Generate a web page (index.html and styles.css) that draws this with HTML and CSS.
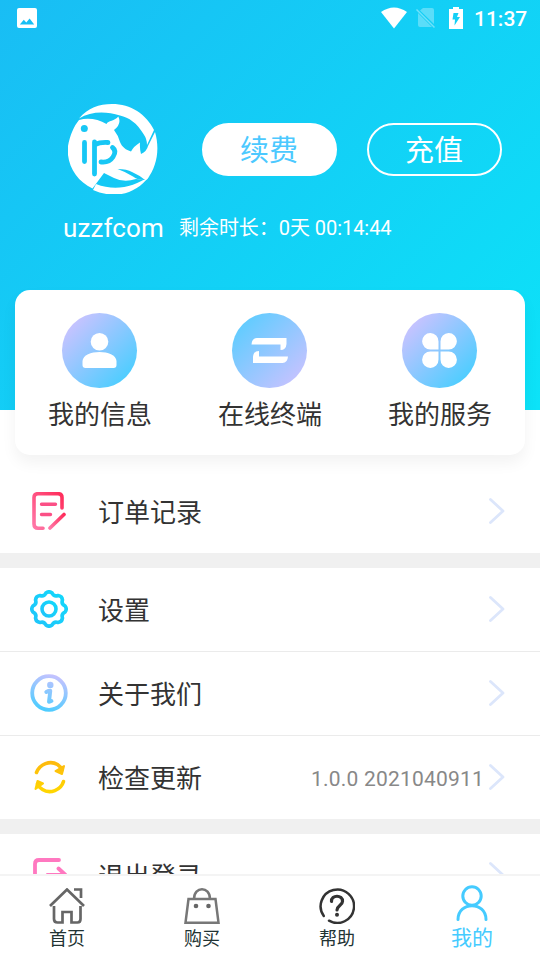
FILE: index.html
```html
<!DOCTYPE html>
<html lang="zh-CN">
<head>
<meta charset="utf-8">
<title>我的</title>
<link rel="stylesheet" href="styles.css">
</head>
<body>
<svg class="defs" width="0" height="0">
  <defs>
    <linearGradient id="pink" x1="1" y1="0" x2="0" y2="1"><stop offset="0" stop-color="#ff2d5b"/><stop offset="1" stop-color="#ff78a8"/></linearGradient>
    <linearGradient id="cyan" x1="1" y1="0" x2="0" y2="1"><stop offset="0" stop-color="#12d8fb"/><stop offset="1" stop-color="#20c4fa"/></linearGradient>
    <linearGradient id="lilac" gradientUnits="userSpaceOnUse" x1="24" y1="0" x2="12" y2="38"><stop offset="0" stop-color="#c8c2ff"/><stop offset="1" stop-color="#45cdff"/></linearGradient>
    <linearGradient id="gold" gradientUnits="userSpaceOnUse" x1="0" y1="2" x2="0" y2="36"><stop offset="0" stop-color="#fdb80f"/><stop offset="1" stop-color="#ffd800"/></linearGradient>
  </defs>
</svg>
<div class="screen">
  <header class="hero">
    <div class="status">
      <svg width="20" height="20" viewBox="0 0 20 20"><path fill="#fff" fill-rule="evenodd" d="M2 0h16q2 0 2 2v16q0 2-2 2H2q-2 0-2-2V2q0-2 2-2zM2.800 16.500h14.400L12.600 10.400 9.300 14.600 6.800 11.700z"/></svg>
      <div class="status-right">
        <svg width="26" height="22" viewBox="0 0 26 22"><path fill="#fff" d="M0 5Q13-4 26 5L13 21.500z"/></svg>
        <svg width="20" height="22" viewBox="0 0 20 22"><path fill="#fff" opacity=".3" d="M7 1h9q2 0 2 2v14L4 3.500zM2 6l14 14H4q-2 0-2-2z"/><path stroke="#fff" opacity=".4" stroke-width="1.500" d="M.5 2.500l18 18"/></svg>
        <svg width="14" height="22" viewBox="0 0 14 22"><path fill="#fff" fill-rule="evenodd" d="M4 0h6v2h4v20H0V2h4zM4.500 6L3.500 12.500H6L5.500 18.500 11 10H8L9.500 6z"/></svg>
        <span class="clock">11:37</span>
      </div>
    </div>
    <div class="profile">
      <svg class="logo" width="90" height="90" viewBox="0 0 90 90">
        <path fill="#fff" d="M11 14.500C20 4 31 0 44 0 63 0 78 10 86 26L79 41Q79 35 75.500 30C69 19 61 13.500 52 11.500 38 7 23 7 11 14.500z"/>
        <path fill="#fff" d="M11 16C20 13.500 30 15 38.500 20 40 16.500 47 17 50.300 12.500Q54 20 46 26 50 31 52 38C54 43 58 46 63 47.500Q66 42 72 38.500 71.500 44 73 50 79 47 80 42L87 28C92 45 89 62 79 75.500Q74 76 68 75 56 79 46 74L36 69 24.500 84.500C8 77-2 60 0 42 2 31 6 22 11 16z"/>
        <path fill="#fff" d="M28 80C46 87 65 84 81.500 72 66 93 43 94 25 86z"/>
        <path d="M49.500 65Q59 65 64 68 71 71 77 76 69 76 65 72.500 58 68 49.500 65z" fill="#17c7f5"/>
        <g fill="none" stroke="#17c7f5" stroke-width="4.800" stroke-linecap="round"><path d="M16.500 38.500v19M26.500 70V38M27 40.500Q32 38 40 38.500M44.500 43.500Q49 47 45 53 41 59 33 58"/><circle cx="16.300" cy="24.500" r="3.500" stroke="none" fill="#17c7f5"/></g>
      </svg>
      <button class="pill solid">续费</button>
      <button class="pill">充值</button>
    </div>
    <div class="account"><span class="name">uzzfcom</span><span class="remain">剩余时长：0天 00:14:44</span></div>
  </header>
  <section class="card">
    <div class="tile"><svg width="75" height="75" viewBox="0 0 75 75"><g fill="#fff"><circle cx="37.500" cy="28.800" r="8.800"/><path d="M20.500 52v-4C21 42 29 39 37.500 39S54 42 54.500 48v4q0 3-3 3h-28q-3 0-3-3z"/></g></svg><span>我的信息</span></div>
    <div class="tile alt"><svg width="75" height="75" viewBox="0 0 75 75"><path fill="#fff" d="M19.500 31.500Q20 25 25 25H54.500V31Q54 37 48.500 37V31.500zM56 43.500Q55.500 50 50.500 50H21V44Q21.500 38 27 38V43.500z"/></svg><span>在线终端</span></div>
    <div class="tile"><svg width="75" height="75" viewBox="0 0 75 75"><path fill="#fff" d="M36.500 36.500h-8a8.200 8.200 0 1 1 8-8zM38.500 36.500v-8a8.200 8.200 0 1 1 8 8zM36.500 38.500v8a8.200 8.200 0 1 1-8-8zM38.500 38.500h8a8.200 8.200 0 1 1-8 8z"/></svg><span>我的服务</span></div>
  </section>
  <main class="list">
    <div class="row">
      <svg class="icon" width="38" height="38" viewBox="0 0 38 38"><g fill="none" stroke="url(#pink)" stroke-width="3.600" stroke-linecap="round" stroke-linejoin="round"><path d="M13 36.200H8Q4 36.200 4 32V5.500Q4 1.700 8 1.700H28Q32 1.700 32 5.500V16"/><path d="M20 36L34 22.500"/></g><path d="M11.500 12.200h14M11.500 22.500h9" fill="none" stroke="#fb5086" stroke-width="3.400" stroke-linecap="round"/></svg>
      <span class="label">订单记录</span><svg class="arrow" width="16" height="26" viewBox="0 0 16 26"><path d="M1.500 1.500L14 13 1.500 24.500"/></svg>
    </div>
    <div class="gap"></div>
    <div class="row">
      <svg class="icon" width="38" height="38" viewBox="0 0 38 38"><g fill="none" stroke="url(#cyan)" stroke-width="3.600" stroke-linejoin="round"><path d="M15.900 3Q19 .6 22.100 3 24 7 28.100 5.500 32 6 32.500 9.900 31 14 35 15.900 37.400 19 35 22.100 31 24 32.500 28.100 32 32 28.100 32.500 24 31 22.100 35 19 37.400 15.900 35 14 31 9.900 32.500 6 32 5.500 28.100 7 24 3 22.100 .6 19 3 15.900 7 14 5.500 9.900 6 6 9.900 5.500 14 7 15.900 3z"/><circle cx="19" cy="19" r="7"/></g></svg>
      <span class="label">设置</span><svg class="arrow" width="16" height="26" viewBox="0 0 16 26"><path d="M1.500 1.500L14 13 1.500 24.500"/></svg>
    </div>
    <div class="row line">
      <svg class="icon" width="38" height="38" viewBox="0 0 38 38"><circle cx="19" cy="19" r="16.800" fill="none" stroke="url(#lilac)" stroke-width="3.800"/><circle cx="20.300" cy="11" r="3.200" fill="url(#lilac)"/><path d="M16.300 18Q18.500 16.800 20.300 16.800L19 27.800Q20 28 21.500 27" fill="none" stroke="url(#lilac)" stroke-width="3.900" stroke-linecap="round" stroke-linejoin="round"/></svg>
      <span class="label">关于我们</span><svg class="arrow" width="16" height="26" viewBox="0 0 16 26"><path d="M1.500 1.500L14 13 1.500 24.500"/></svg>
    </div>
    <div class="row line">
      <svg class="icon" width="38" height="38" viewBox="0 0 38 38"><g fill="none" stroke="url(#gold)" stroke-width="3.600" stroke-linecap="round"><path d="M6.500 14.500C10 6 20 2 27.500 6.500Q30.500 8.500 32 12"/><path d="M33.500 23.500C31 32 20 36.500 12.500 31.500Q8.500 29 7.500 26"/></g><path fill="url(#gold)" stroke="url(#gold)" stroke-width="2" stroke-linejoin="round" d="M34 8L32 16 25.500 13zM5.500 31L7.500 23 13 25.500z"/></svg>
      <span class="label">检查更新</span><span class="version">1.0.0 2021040911</span><svg class="arrow" width="16" height="26" viewBox="0 0 16 26"><path d="M1.500 1.500L14 13 1.500 24.500"/></svg>
    </div>
    <div class="gap"></div>
    <div class="row last">
      <svg class="icon" width="38" height="38" viewBox="0 0 38 38"><path d="M29 3H9Q5 3 5 7V32Q5 36 9 36H29M17.500 18H34M28.500 11.500L35.500 18 28.500 25" fill="none" stroke="#ff78c0" stroke-width="3.800" stroke-linecap="round" stroke-linejoin="round"/></svg>
      <span class="label">退出登录</span><svg class="arrow" width="16" height="26" viewBox="0 0 16 26"><path d="M1.500 1.500L14 13 1.500 24.500"/></svg>
    </div>
  </main>
  <nav class="tabs">
    <div class="tab"><svg width="36" height="36" viewBox="0 0 36 36"><path d="M1 18L18 1.500 35 18M25 1.500H32V10M5 18V31Q5 34.500 8.500 34.500H13.500V24H22.500V34.500H28.500Q31.500 34.500 31.500 31V18" fill="none" stroke="#666" stroke-width="2.700"/></svg><span>首页</span></div>
    <div class="tab"><svg width="36" height="36" viewBox="0 0 36 36"><path d="M4.500 11H31.500L34.500 34.700H1.500zM10 11C10-2 26-2 26 11" fill="none" stroke="#777" stroke-width="2.500"/><circle cx="12" cy="18" r="2.300" fill="#666"/><circle cx="24.500" cy="18" r="2.300" fill="#666"/></svg><span>购买</span></div>
    <div class="tab"><svg width="36" height="36" viewBox="0 0 36 36"><g fill="none" stroke="#333" stroke-linecap="round"><path stroke-width="2.500" d="M4.800 28A16.700 16.700 0 1 1 10 32.700"/><path stroke-width="3.200" d="M12.500 13.500C12 6.500 24 6.500 23.500 13.500 23.500 17 18 17.500 18 22"/></g><circle cx="18" cy="26.800" r="2" fill="#333"/></svg><span>帮助</span></div>
    <div class="tab active"><svg width="36" height="38" viewBox="0 0 36 38"><g fill="none" stroke="#45cbff" stroke-width="3" stroke-linecap="round"><circle cx="18" cy="11" r="9.200"/><path d="M4 34.500C4 16 32 16 32 34.500"/></g></svg><span>我的</span></div>
  </nav>
</div>
</body>
</html>
```

FILE: styles.css
```css
* { box-sizing: border-box; }
body { margin: 0; font-family: Roboto, "Noto Sans CJK SC", sans-serif; color: #333; }
svg { display: block; flex: none; }
.defs { position: absolute; }
.screen { height: 960px; display: flex; flex-direction: column; overflow: hidden; background: #fff; }
.hero { height: 410px; flex: none; background: linear-gradient(135deg, #19bdf4, #0ce3f8); color: #fff; }
.status { height: 36px; padding: 0 12px 0 17px; display: flex; align-items: center; justify-content: space-between; }
.status-right { display: flex; align-items: center; height: 34px; }
.status-right svg { margin-bottom: 1px; }
.status-right svg:nth-child(2) { margin-left: 9px; }
.status-right svg:nth-child(3) { margin-left: 13px; }
.clock { width: 54px; margin-left: 11px; margin-top: 2px; font-size: 21px; font-weight: 500; white-space: nowrap; }
.profile { display: flex; align-items: center; margin-top: 68px; padding: 0 38px 0 68px; height: 90px; }
.pill { width: 135px; height: 53px; margin-left: 30px; padding: 4px 1px 0 0; border: 2px solid #fff; border-radius: 27px; background: none; color: #fff; font: 29px/1 Roboto, "Noto Sans CJK SC", sans-serif; }
.pill.solid { margin-left: 44px; background: #fff; color: #4cc9ff; }
.account { display: flex; align-items: center; height: 40px; margin-top: 14px; padding-left: 63px; }
.name { width: 116px; font-size: 26px; letter-spacing: .1px; }
.remain { margin-bottom: 4px; font-size: 20px; letter-spacing: -.05px; }
.card { flex: none; height: 165px; margin: -120px 15px 0; display: grid; grid-template-columns: repeat(3, 1fr); background: #fff; border-radius: 15px; box-shadow: 0 8px 15px rgba(0,0,0,.05); }
.tile { display: flex; flex-direction: column; align-items: center; padding-top: 23px; font-size: 26px; line-height: 38px; }
.tile svg { margin-right: 1px; border-radius: 50%; background: linear-gradient(135deg, #d0c2ff 8%, #45ceff 92%); }
.tile.alt svg { background: linear-gradient(135deg, #5acdff 8%, #c9c2ff 92%); }
.tile span { margin-top: 8px; }
.list { flex: 1; min-height: 0; overflow: hidden; padding-top: 15px; }
.row { height: 83px; display: flex; align-items: center; padding: 0 35px 0 30px; }
.row.line { height: 84px; border-top: 1px solid #ebebeb; }
.icon, .arrow { margin-bottom: 2px; }
.last .icon { margin-bottom: 0; }
.label { margin-left: 30px; margin-right: auto; padding-top: 2px; font-size: 26px; line-height: 38px; }
.version { margin-right: 5px; padding-top: 3px; font-size: 21px; color: #888; letter-spacing: .2px; }
.arrow path { fill: none; stroke: #dce6fb; stroke-width: 2.8; stroke-linecap: round; stroke-linejoin: round; }
.gap { height: 15px; background: #f0f0f0; }
.tabs { flex: none; height: 86px; border-top: 2px solid #f4f4f4; background: #fff; display: grid; grid-template-columns: repeat(4, 1fr); }
.tab { display: flex; flex-direction: column; align-items: center; padding-top: 12px; padding-right: 1px; font-size: 18px; line-height: 26px; color: #233; }
.tab span { margin-top: 2px; }
.tab.active { padding-top: 9px; font-size: 21px; color: #45cbff; }
```
